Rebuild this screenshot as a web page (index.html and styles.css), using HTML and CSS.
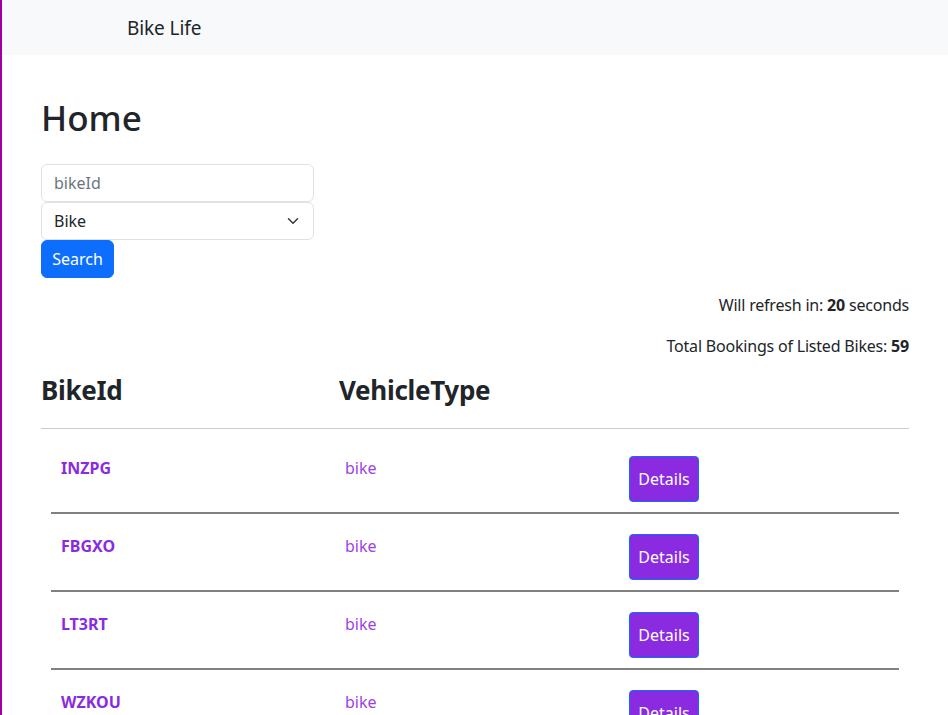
FILE: index.html
```html
<!DOCTYPE html>
<html lang="en">
<head>
<meta charset="utf-8">
<title>Bike Life</title>
<link rel="stylesheet" href="styles.css">
</head>
<body>
<nav class="navbar">
  <span class="brand">Bike Life</span>
</nav>
<main class="page">
  <h1 class="title">Home</h1>
  <form class="search">
    <input class="field" type="text" placeholder="bikeId">
    <div class="field select">
      <span>Bike</span>
      <svg class="chev" width="12" height="12" viewBox="0 0 16 16"><path d="M2 5l6 6 6-6" fill="none" stroke="#343a40" stroke-width="2" stroke-linecap="round" stroke-linejoin="round"/></svg>
    </div>
    <button class="btn-search" type="button">Search</button>
  </form>
  <p class="info">Will refresh in: <b>20</b> seconds</p>
  <p class="info">Total Bookings of Listed Bikes: <b>59</b></p>
  <div class="thead">
    <h3>BikeId</h3>
    <h3>VehicleType</h3>
  </div>
  <div class="rows">
    <div class="row"><span class="id">INZPG</span><span class="type">bike</span><span><button class="btn-details" type="button">Details</button></span></div>
    <div class="row"><span class="id">FBGXO</span><span class="type">bike</span><span><button class="btn-details" type="button">Details</button></span></div>
    <div class="row"><span class="id">LT3RT</span><span class="type">bike</span><span><button class="btn-details" type="button">Details</button></span></div>
    <div class="row"><span class="id">WZKOU</span><span class="type">bike</span><span><button class="btn-details" type="button">Details</button></span></div>
  </div>
</main>
</body>
</html>
```

FILE: styles.css
```css
* { box-sizing: border-box; }
html, body { margin: 0; padding: 0; }
body {
  font-family: "Segoe UI", "Noto Sans", "Open Sans", sans-serif;
  font-size: 16px;
  line-height: 1.5;
  color: #212529;
  background: #fff;
  border-left: 2px solid #a000a0;
  min-height: 715px;
}
.navbar {
  background: #f8f9fa;
  height: 55px;
  display: flex;
  align-items: center;
  padding-left: 125px;
}
.brand {
  font-size: 19px;
  line-height: 30px;
  letter-spacing: -0.1px;
}
.page {
  padding: 0 39px;
}
.title {
  font-size: 35px;
  font-weight: 500;
  line-height: 1.2;
  margin: 42px 0 25px;
}
.search {
  display: flex;
  flex-direction: column;
  align-items: flex-start;
}
.field {
  width: 273px;
  height: 38px;
  border: 1px solid #dee2e6;
  border-radius: 6px;
  padding: 6px 12px;
  font: inherit;
  color: #212529;
  background: #fff;
}
.field::placeholder { color: #6c757d; }
.select {
  display: flex;
  align-items: center;
  justify-content: space-between;
  padding-right: 14px;
}
.btn-search {
  width: 73px;
  height: 38px;
  font: inherit;
  color: #fff;
  background: #0d6efd;
  border: 1px solid #0d6efd;
  border-radius: 6px;
  padding: 6px 0;
  text-align: center;
}
.info {
  text-align: right;
  margin: 15px 0 0;
  letter-spacing: -0.2px;
}
.info + .info { margin-top: 17px; }
.thead {
  display: grid;
  grid-template-columns: 298px 298px 1fr;
  margin-top: 16px;
  padding-bottom: 22px;
  border-bottom: 1px solid #ccc;
}
.thead h3 {
  margin: 0;
  font-size: 26px;
  font-weight: 700;
  line-height: 32px;
  letter-spacing: -0.3px;
}
.rows {
  padding: 7px 10px 0;
}
.row {
  display: grid;
  grid-template-columns: 284px 284px 1fr;
  align-items: start;
  padding: 19px 10px 10px;
  border-bottom: 2px solid #808080;
}
.id {
  font-weight: 700;
  color: #8a2be2;
  line-height: 24px;
  margin-top: 1px;
}
.type {
  color: #9a44e6;
  line-height: 24px;
  margin-top: 1px;
}
.btn-details {
  width: 70px;
  font: inherit;
  color: #fff;
  background: #8a2be2;
  border: 1px solid #0d6efd;
  border-radius: 4px;
  padding: 10px 0;
  line-height: 24px;
  text-align: center;
  margin-top: 1px;
}
```
